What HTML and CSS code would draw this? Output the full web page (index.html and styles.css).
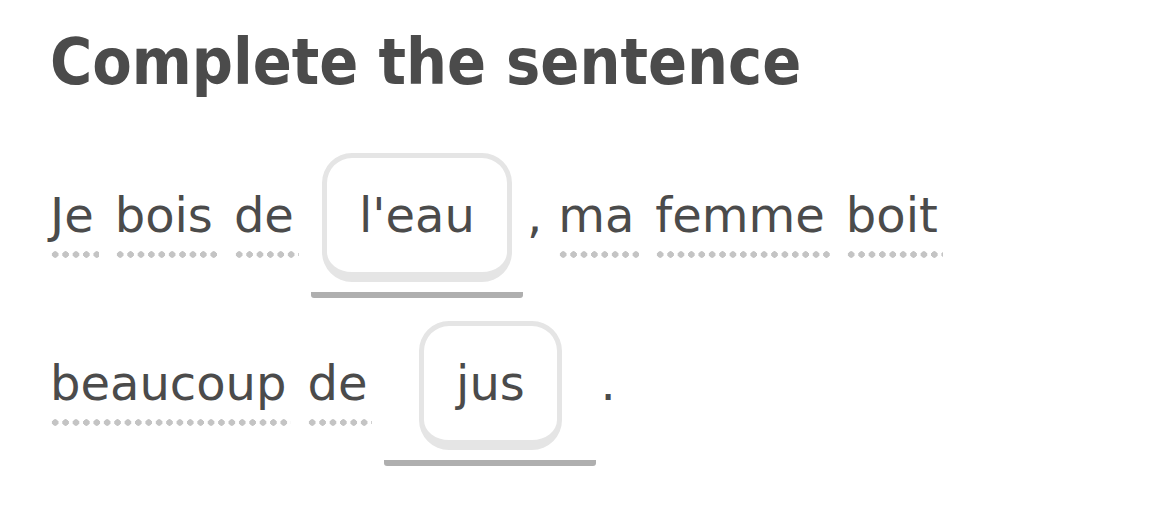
FILE: index.html
```html
<!DOCTYPE html>
<html>
<head>
	<meta name="viewport" content="width=device-width initial-scale=1">
	<title>Complete the sentence</title>
	<link rel="stylesheet" href="styles.css">
</head>
<body>
<div class="challenge">
	<h1 class="prompt">Complete the sentence</h1>
	<div class="sentence">
		<span class="word">Je</span>
		<span class="word">bois</span>
		<span class="word">de</span>
		<span class="blank"><span class="tile">l'eau</span></span>
		<span class="punct">,</span>
		<span class="word">ma</span>
		<span class="word">femme</span>
		<span class="word">boit</span>
		<span class="word">beaucoup</span>
		<span class="word">de</span>
		<span class="blank"><span class="tile">jus</span></span>
		<span class="punct">.</span>
	</div>
</div>
</body>
</html>
```

FILE: styles.css
```css
body{
	margin: 0;
	background: #fff;
}
*{
	font-family: "DejaVu Sans", sans-serif;
	color: #4b4b4b;
}
.challenge{
	padding: 24px 50px 0 50px;
}
.prompt{
	margin: 0;
	font-family: "DejaVu Sans Condensed", "DejaVu Sans", sans-serif;
	font-stretch: condensed;
	font-size: 64px;
	font-weight: bold;
	line-height: 76px;
}
.sentence{
	display: flex;
	flex-wrap: wrap;
	align-items: baseline;
	column-gap: 16px;
	row-gap: 23px;
	margin-top: 53px;
	font-size: 48px;
}
/* hoverable words get a dotted underline */
.word{
	padding-right: 5px;
	padding-bottom: 15px;
	background-image: radial-gradient(circle, #c4c4c4 3px, transparent 3.4px);
	background-size: 10.4px 7px;
	background-repeat: repeat-x;
	background-position: left bottom;
}
.blank{
	display: flex;
	flex-direction: column;
	align-items: center;
	width: 212px;
	padding-bottom: 10px;
	border-bottom: 6px solid #afafaf;
	border-radius: 3px;
	margin-left: -4px;
}
.tile{
	padding: 29px 32px;
	border: 5px solid #e5e5e5;
	border-bottom-width: 10px;
	border-radius: 30px;
	background: #fff;
}
.punct{
	margin-left: -12px;
}
```
